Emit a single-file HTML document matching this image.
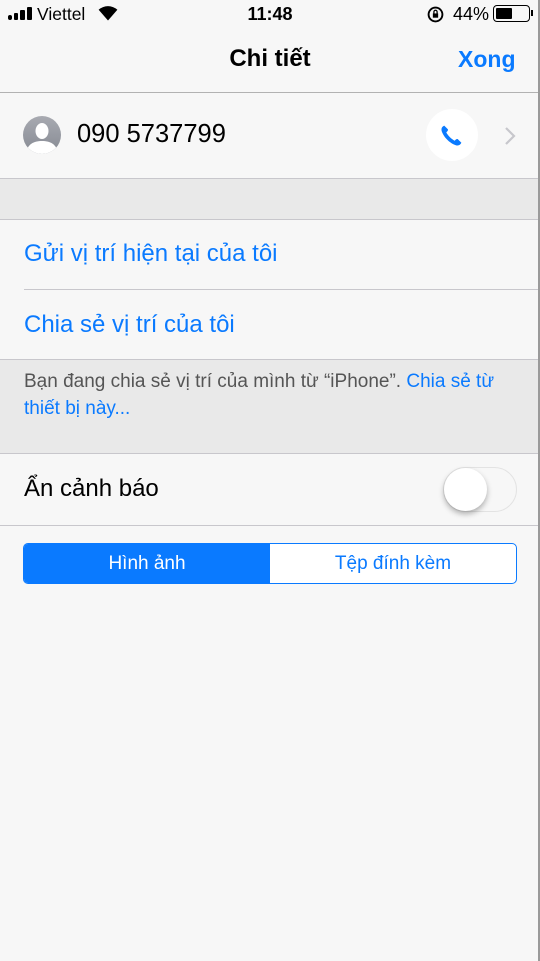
<!DOCTYPE html>
<html><head><meta charset="utf-8">
<style>
*{margin:0;padding:0;box-sizing:border-box}
body{width:540px;height:961px;background:#f7f7f7;font-family:"Liberation Sans",sans-serif;position:relative;overflow:hidden;color:#000}
.a{position:absolute}
.line{position:absolute;left:0;right:0;height:1px;background:#c8c7cc}
.blue{color:#0a7aff}
</style></head><body>
<!-- status bar -->
<div class="a" style="left:8px;top:15px;width:4px;height:5px;background:#000;border-radius:2px"></div>
<div class="a" style="left:14px;top:13px;width:4px;height:7px;background:#000;border-radius:1px"></div>
<div class="a" style="left:20px;top:10px;width:5px;height:10px;background:#000;border-radius:1px"></div>
<div class="a" style="left:27px;top:7px;width:5px;height:13px;background:#000;border-radius:1px"></div>
<div class="a" style="left:37px;top:4px;font-size:17.5px">Viettel</div>
<svg class="a" style="left:97px;top:6px" width="22" height="15" viewBox="0 0 22 16"><path d="M11 15.5 L1 4 A15 15 0 0 1 21 4 Z" fill="#000"/></svg>
<div class="a" style="left:0;width:540px;top:4px;text-align:center;font-size:18px;font-weight:bold">11:48</div>
<svg class="a" style="left:427px;top:6px" width="17" height="17" viewBox="0 0 16 16"><circle cx="8" cy="8" r="6.5" fill="none" stroke="#000" stroke-width="1.8"/><rect x="5.5" y="7" width="5" height="4" fill="#000"/><path d="M6.5 7V5.5a1.5 1.5 0 0 1 3 0V7" fill="none" stroke="#000" stroke-width="1.2"/></svg>
<div class="a" style="left:453px;top:4px;font-size:18px">44%</div>
<div class="a" style="left:493px;top:5px;width:37px;height:17px;border:1.5px solid #000;border-radius:4px"></div>
<div class="a" style="left:496px;top:8px;width:16px;height:11px;background:#000;border-radius:1px"></div>
<div class="a" style="left:531px;top:10px;width:2px;height:6px;background:#000"></div>
<!-- nav -->
<div class="a" style="left:0;width:540px;top:45px;text-align:center;font-size:24px;font-weight:bold">Chi tiết</div>
<div class="a blue" style="left:458px;top:46px;font-size:23px;font-weight:bold">Xong</div>
<div class="line" style="top:92px;background:#b2b2b2"></div>
<!-- contact -->
<svg class="a" style="left:23px;top:116px" width="38" height="38" viewBox="0 0 38 38"><defs><linearGradient id="g" x1="0" y1="0" x2="0" y2="1"><stop offset="0" stop-color="#a8aab1"/><stop offset="1" stop-color="#868a93"/></linearGradient><clipPath id="c"><circle cx="19" cy="19" r="19"/></clipPath></defs><circle cx="19" cy="19" r="19" fill="url(#g)"/><g clip-path="url(#c)" fill="#fff"><ellipse cx="19" cy="15" rx="6.5" ry="8"/><path d="M3 38 C4 28 11 25 19 25 C27 25 34 28 35 38Z"/></g></svg>
<div class="a" style="left:77px;top:120px;font-size:25.5px">090 5737799</div>
<div class="a" style="left:426px;top:109px;width:52px;height:52px;border-radius:50%;background:#fff"></div>
<svg class="a" style="left:439px;top:123px" width="25" height="25" viewBox="0 0 24 24"><path d="M5 2.5 C3 3.5 2 5 2.5 7.5 C4 13 10 19.5 16.5 21.5 C19 22 20.5 21 21.5 19 L18 15.5 C17 15 16 16 15 17 C12 15.5 8.5 12 7 9 C8 8 9 7 8.5 6 Z" fill="#0a7aff"/></svg>
<svg class="a" style="left:504px;top:126px" width="12" height="20" viewBox="0 0 12 20"><path d="M2 2 L10 10 L2 18" fill="none" stroke="#c7c7cc" stroke-width="2.2"/></svg>
<div class="line" style="top:178px"></div>
<div class="a" style="left:0;top:179px;width:540px;height:40px;background:#e9e9e9"></div>
<div class="line" style="top:219px"></div>
<div class="a blue" style="left:24px;top:240px;font-size:24px">Gửi vị trí hiện tại của tôi</div>
<div class="line" style="top:289px;left:24px"></div>
<div class="a blue" style="left:24px;top:311px;font-size:24px">Chia sẻ vị trí của tôi</div>
<div class="line" style="top:359px"></div>
<div class="a" style="left:0;top:360px;width:540px;height:93px;background:#e9e9e9"></div>
<div class="a" style="left:24px;top:368px;white-space:nowrap;font-size:19px;line-height:27px;color:#555">Bạn đang chia sẻ vị trí của mình từ “iPhone”. <span class="blue">Chia sẻ từ<br>thiết bị này...</span></div>
<div class="line" style="top:453px"></div>
<div class="a" style="left:24px;top:475px;font-size:24px">Ẩn cảnh báo</div>
<div class="a" style="left:443px;top:467px;width:74px;height:45px;border-radius:23px;border:1.5px solid #e3e3e3;background:#f7f7f7"></div>
<div class="a" style="left:444px;top:468px;width:43px;height:43px;border-radius:50%;background:#fff;box-shadow:0 3px 6px rgba(0,0,0,.3)"></div>
<div class="line" style="top:525px"></div>
<div class="a" style="left:23px;top:543px;width:494px;height:41px;border:1.5px solid #0a7aff;border-radius:5px;background:#fff;overflow:hidden">
<div class="a" style="left:0;top:0;width:246px;height:100%;background:#0a7aff;color:#fff;font-size:19px;text-align:center;line-height:40px">Hình ảnh</div>
<div class="a blue" style="left:246px;top:0;width:246px;height:100%;font-size:19px;text-align:center;line-height:40px">Tệp đính kèm</div>
</div>
<div class="a" style="left:538px;top:0;width:2px;height:961px;background:#9a9a9a"></div>
</body></html>
